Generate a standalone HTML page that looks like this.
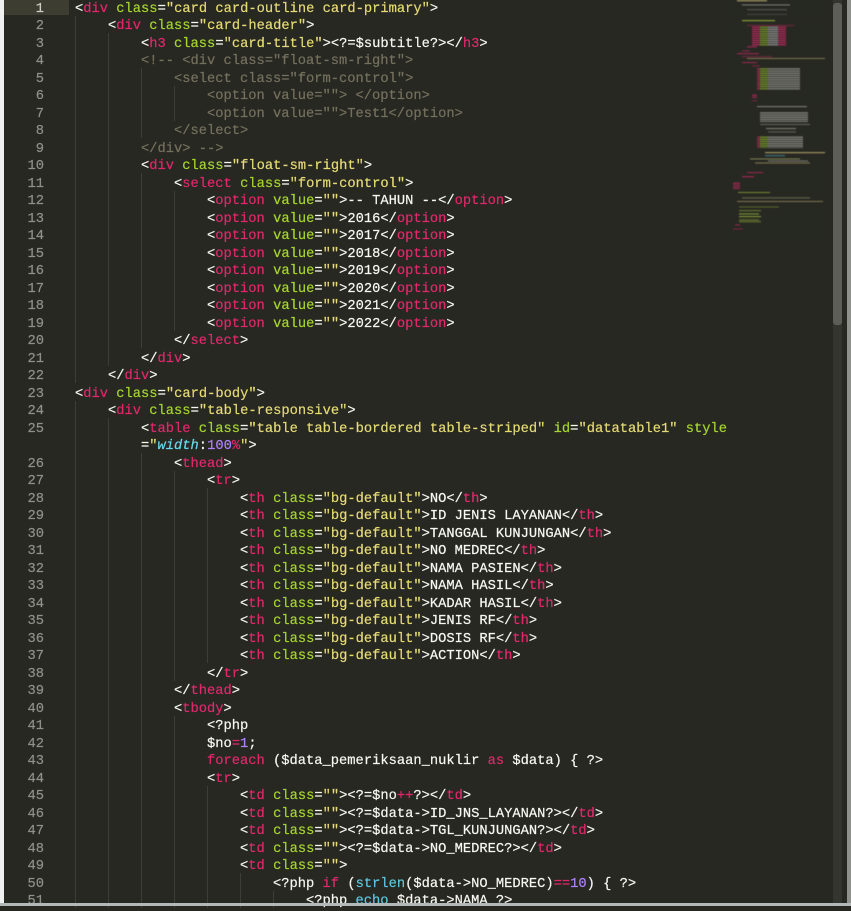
<!DOCTYPE html>
<html><head><meta charset="utf-8"><style>
html,body{margin:0;padding:0;background:#272822}
body{width:851px;height:906px;overflow:hidden;position:relative;font-family:"Liberation Mono",monospace;font-size:13.75px;color:#f8f8f2;-webkit-text-stroke:.2px}
#lh{position:absolute;left:4px;top:0;width:65px;height:15px;background:#3e3d32}
#g{position:absolute;left:4px;top:-2px;width:40px;text-align:right;line-height:17.5px;color:#8f908a}
#g div{height:17.5px;box-sizing:border-box;padding-top:2.5px}
#c{position:absolute;left:75px;top:-2px;width:760px}
#c div{height:17.5px;box-sizing:border-box;padding-top:2.5px;line-height:17.5px;white-space:pre;background-image:repeating-linear-gradient(90deg,#3d3e38 0 1px,transparent 1px 33px);background-repeat:no-repeat;background-size:0 100%}
.i1{background-size:33px 100%!important}.i2{background-size:66px 100%!important}.i3{background-size:99px 100%!important}.i4{background-size:132px 100%!important}.i5{background-size:165px 100%!important}.i6{background-size:198px 100%!important}.i7{background-size:231px 100%!important}
i{font-style:normal}
t{color:#e0286c}a{color:#a6d62e}s{color:#e6db74;text-decoration:none}m{color:#75715e}n{color:#ae81ff}b{color:#5cc8e0;font-weight:normal}u{color:#66d9ef;font-style:italic;text-decoration:none}
#st{position:absolute;left:0;top:0;width:4px;height:906px;background:#f0f0f0}
#bt{position:absolute;left:0;top:903px;width:851px;height:3px;background:#b3b8b8}
#tr{position:absolute;left:833px;top:0;width:9px;height:903px;background:#34352f}
#th{position:absolute;left:833px;top:3px;width:9px;height:322px;background:#5d5e58;border-radius:3px}
#rs{position:absolute;left:847px;top:0;width:4px;height:903px;background:#8f918c}
#mm{position:absolute;left:720px;top:0;opacity:.7;filter:blur(.5px)}
</style></head><body>
<div id="lh"></div>
<div id="g"><div style="color:#cfcfc8">1</div><div>2</div><div>3</div><div>4</div><div>5</div><div>6</div><div>7</div><div>8</div><div>9</div><div>10</div><div>11</div><div>12</div><div>13</div><div>14</div><div>15</div><div>16</div><div>17</div><div>18</div><div>19</div><div>20</div><div>21</div><div>22</div><div>23</div><div>24</div><div>25</div><div></div><div>26</div><div>27</div><div>28</div><div>29</div><div>30</div><div>31</div><div>32</div><div>33</div><div>34</div><div>35</div><div>36</div><div>37</div><div>38</div><div>39</div><div>40</div><div>41</div><div>42</div><div>43</div><div>44</div><div>45</div><div>46</div><div>47</div><div>48</div><div>49</div><div>50</div><div>51</div></div>
<div id="c">
<div>&lt;<t>div</t> <a>class</a>=<s>"card card-outline card-primary"</s>&gt;</div>
<div class="i1">    &lt;<t>div</t> <a>class</a>=<s>"card-header"</s>&gt;</div>
<div class="i2">        &lt;<t>h3</t> <a>class</a>=<s>"card-title"</s>&gt;&lt;?=$subtitle?&gt;&lt;/<t>h3</t>&gt;</div>
<div class="i2">        <m>&lt;!-- &lt;div class="float-sm-right"&gt;</m></div>
<div class="i3">            <m>&lt;select class="form-control"&gt;</m></div>
<div class="i4">                <m>&lt;option value=""&gt; &lt;/option&gt;</m></div>
<div class="i4">                <m>&lt;option value=""&gt;Test1&lt;/option&gt;</m></div>
<div class="i3">            <m>&lt;/select&gt;</m></div>
<div class="i2">        <m>&lt;/div&gt; --&gt;</m></div>
<div class="i2">        &lt;<t>div</t> <a>class</a>=<s>"float-sm-right"</s>&gt;</div>
<div class="i3">            &lt;<t>select</t> <a>class</a>=<s>"form-control"</s>&gt;</div>
<div class="i4">                &lt;<t>option</t> <a>value</a>=<s>""</s>&gt;-- TAHUN --&lt;/<t>option</t>&gt;</div>
<div class="i4">                &lt;<t>option</t> <a>value</a>=<s>""</s>&gt;2016&lt;/<t>option</t>&gt;</div>
<div class="i4">                &lt;<t>option</t> <a>value</a>=<s>""</s>&gt;2017&lt;/<t>option</t>&gt;</div>
<div class="i4">                &lt;<t>option</t> <a>value</a>=<s>""</s>&gt;2018&lt;/<t>option</t>&gt;</div>
<div class="i4">                &lt;<t>option</t> <a>value</a>=<s>""</s>&gt;2019&lt;/<t>option</t>&gt;</div>
<div class="i4">                &lt;<t>option</t> <a>value</a>=<s>""</s>&gt;2020&lt;/<t>option</t>&gt;</div>
<div class="i4">                &lt;<t>option</t> <a>value</a>=<s>""</s>&gt;2021&lt;/<t>option</t>&gt;</div>
<div class="i4">                &lt;<t>option</t> <a>value</a>=<s>""</s>&gt;2022&lt;/<t>option</t>&gt;</div>
<div class="i3">            &lt;/<t>select</t>&gt;</div>
<div class="i2">        &lt;/<t>div</t>&gt;</div>
<div class="i1">    &lt;/<t>div</t>&gt;</div>
<div>&lt;<t>div</t> <a>class</a>=<s>"card-body"</s>&gt;</div>
<div class="i1">    &lt;<t>div</t> <a>class</a>=<s>"table-responsive"</s>&gt;</div>
<div class="i2">        &lt;<t>table</t> <a>class</a>=<s>"table table-bordered table-striped"</s> <a>id</a>=<s>"datatable1"</s> <a>style</a></div>
<div class="i2">        =<s>"</s><u>width</u>:<n>100</n><t>%</t><s>"</s>&gt;</div>
<div class="i3">            &lt;<t>thead</t>&gt;</div>
<div class="i4">                &lt;<t>tr</t>&gt;</div>
<div class="i5">                    &lt;<t>th</t> <a>class</a>=<s>"bg-default"</s>&gt;NO&lt;/<t>th</t>&gt;</div>
<div class="i5">                    &lt;<t>th</t> <a>class</a>=<s>"bg-default"</s>&gt;ID JENIS LAYANAN&lt;/<t>th</t>&gt;</div>
<div class="i5">                    &lt;<t>th</t> <a>class</a>=<s>"bg-default"</s>&gt;TANGGAL KUNJUNGAN&lt;/<t>th</t>&gt;</div>
<div class="i5">                    &lt;<t>th</t> <a>class</a>=<s>"bg-default"</s>&gt;NO MEDREC&lt;/<t>th</t>&gt;</div>
<div class="i5">                    &lt;<t>th</t> <a>class</a>=<s>"bg-default"</s>&gt;NAMA PASIEN&lt;/<t>th</t>&gt;</div>
<div class="i5">                    &lt;<t>th</t> <a>class</a>=<s>"bg-default"</s>&gt;NAMA HASIL&lt;/<t>th</t>&gt;</div>
<div class="i5">                    &lt;<t>th</t> <a>class</a>=<s>"bg-default"</s>&gt;KADAR HASIL&lt;/<t>th</t>&gt;</div>
<div class="i5">                    &lt;<t>th</t> <a>class</a>=<s>"bg-default"</s>&gt;JENIS RF&lt;/<t>th</t>&gt;</div>
<div class="i5">                    &lt;<t>th</t> <a>class</a>=<s>"bg-default"</s>&gt;DOSIS RF&lt;/<t>th</t>&gt;</div>
<div class="i5">                    &lt;<t>th</t> <a>class</a>=<s>"bg-default"</s>&gt;ACTION&lt;/<t>th</t>&gt;</div>
<div class="i4">                &lt;/<t>tr</t>&gt;</div>
<div class="i3">            &lt;/<t>thead</t>&gt;</div>
<div class="i3">            &lt;<t>tbody</t>&gt;</div>
<div class="i4">                &lt;?php</div>
<div class="i4">                $no<t>=</t><n>1</n>;</div>
<div class="i4">                <t>foreach</t> ($data_pemeriksaan_nuklir <t>as</t> $data) { ?&gt;</div>
<div class="i4">                &lt;<t>tr</t>&gt;</div>
<div class="i5">                    &lt;<t>td</t> <a>class</a>=<s>""</s>&gt;&lt;?=$no<t>++</t>?&gt;&lt;/<t>td</t>&gt;</div>
<div class="i5">                    &lt;<t>td</t> <a>class</a>=<s>""</s>&gt;&lt;?=$data-&gt;ID_JNS_LAYANAN?&gt;&lt;/<t>td</t>&gt;</div>
<div class="i5">                    &lt;<t>td</t> <a>class</a>=<s>""</s>&gt;&lt;?=$data-&gt;TGL_KUNJUNGAN?&gt;&lt;/<t>td</t>&gt;</div>
<div class="i5">                    &lt;<t>td</t> <a>class</a>=<s>""</s>&gt;&lt;?=$data-&gt;NO_MEDREC?&gt;&lt;/<t>td</t>&gt;</div>
<div class="i5">                    &lt;<t>td</t> <a>class</a>=<s>""</s>&gt;</div>
<div class="i6">                        &lt;?php <t>if</t> (<b>strlen</b>($data-&gt;NO_MEDREC)<t>==</t><n>10</n>) { ?&gt;</div>
<div class="i7">                            &lt;?php <b>echo</b> $data-&gt;NAMA ?&gt;</div>
</div>
<svg id="mm" width="110" height="240" viewBox="0 0 110 240">
<defs><pattern id="p" width="4" height="2.2" patternUnits="userSpaceOnUse"><rect width="4" height=".7" y="1.5" fill="#272822"/></pattern></defs>
<g fill="#c8b878"><rect x="17" y="0" width="30" height="1.5"/><rect x="22" y="20" width="33" height="1.5" fill="#a6c83e"/><rect x="27" y="58" width="78" height="1.5"/><rect x="45" y="152" width="60" height="1.5"/><rect x="35" y="162" width="55" height="1.5"/><rect x="17" y="201" width="86" height="1.5"/></g>
<g fill="#999"><rect x="22" y="4" width="48" height="1.5"/><rect x="27" y="9" width="40" height="1.5" opacity=".5"/><rect x="27" y="14" width="40" height="1.5" opacity=".5"/></g>
<g id="a1"><rect x="32" y="26" width="8" height="20" fill="#d02a68"/><rect x="40" y="26" width="8" height="20" fill="#8ab030"/><rect x="48" y="26" width="10" height="20" fill="#aaa"/><rect x="58" y="26" width="8" height="20" fill="#d02a68"/></g>
<g fill="#b8285e"><rect x="27" y="25" width="47" height="1.5"/><rect x="27" y="46" width="10" height="1.5"/><rect x="22" y="50" width="8" height="1.5"/><rect x="17" y="53" width="22" height="1.5"/><rect x="22" y="56" width="30" height="1.5"/><rect x="22" y="62" width="15" height="1.5"/><rect x="32" y="65" width="8" height="1.5"/><rect x="32" y="94" width="5" height="4"/><rect x="32" y="100" width="5" height="1.5"/><rect x="13" y="182" width="7" height="6"/><rect x="13" y="188" width="7" height="1.5"/><rect x="27" y="172" width="16" height="1.5"/><rect x="22" y="176" width="12" height="1.5"/></g>
<g><rect x="37" y="68" width="3" height="22" fill="#c02a60"/><rect x="40" y="68" width="8" height="22" fill="#8ab030"/><rect x="48" y="68" width="32" height="22" fill="#a09f98"/></g>
<g fill="#a09f98"><rect x="37" y="106" width="50" height="1.5"/><rect x="40" y="112" width="48" height="10"/><rect x="40" y="124" width="50" height="1.5"/><rect x="46" y="128" width="30" height="1.5"/><rect x="48" y="131" width="28" height="1.5"/><rect x="48" y="160" width="40" height="1.5"/></g>
<g><rect x="37" y="136" width="3" height="12" fill="#c02a60"/><rect x="40" y="136" width="8" height="12" fill="#8ab030"/><rect x="48" y="136" width="35" height="12" fill="#a09f98"/><rect x="45" y="155" width="20" height="1.5" fill="#5cc8e0"/><rect x="30" y="158" width="50" height="1.5" fill="#a0a068"/></g>
<g fill="#a6c83e"><rect x="18" y="192" width="32" height="1.5"/><rect x="22" y="197" width="68" height="1.5" fill="#a8a878"/><rect x="19" y="206" width="40" height="1.5" opacity=".7"/><rect x="19" y="210" width="22" height="1.5"/><rect x="19" y="213" width="20" height="1.5"/><rect x="19" y="216" width="22" height="1.5"/><rect x="19" y="219" width="20" height="1.5"/><rect x="19" y="221" width="22" height="1.5"/></g>
<g fill="#b8285e"><rect x="15" y="224" width="5" height="1.5"/><rect x="13" y="228" width="10" height="1.5"/></g>
<rect width="110" height="240" fill="url(#p)"/>
</svg>
<div id="tr"></div><div id="th"></div><div id="rs"></div>
<div id="st"></div><div id="bt"></div>
</body></html>
